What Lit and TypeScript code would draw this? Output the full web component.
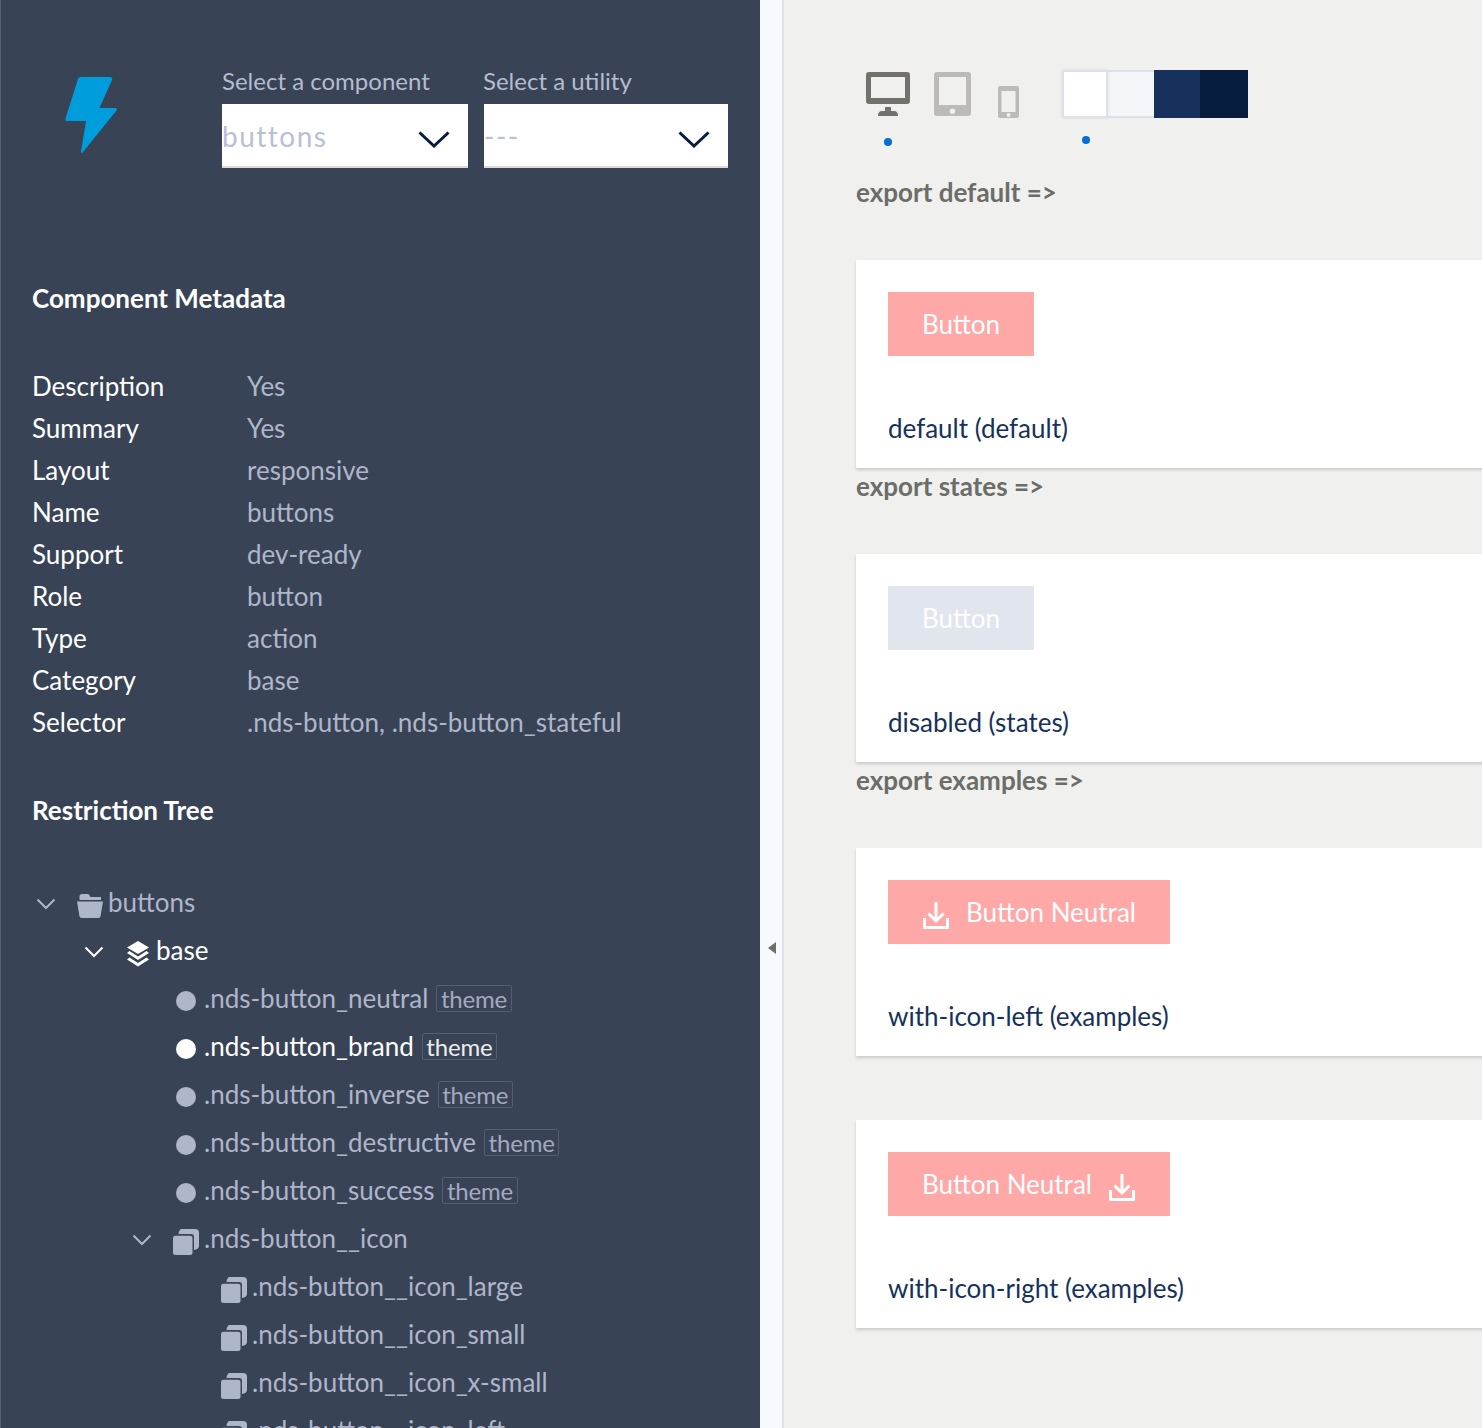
import { LitElement, html, css, svg } from 'lit';
import { customElement } from 'lit/decorators.js';

const chevron = html`<svg class="chev" viewBox="0 0 20 12"><path d="M1.500 1.500 10 10l8.500-8.500" fill="none" stroke="currentColor" stroke-width="2"/></svg>`;
const selectChevron = html`<svg class="caret" viewBox="0 0 32 17"><path d="M1.500 1.500 16 15l14.500-13.500" fill="none" stroke="currentColor" stroke-width="3"/></svg>`;

const folderIcon = svg`<path d="M6 3h6.500l2 3H25v3H3.500V5.500Q3.500 3 6 3ZM1 10.500H27L24.500 25.500Q24 27 22 27H6Q4 27 3.500 25.500Z" fill="currentColor"/>`;
const stackIcon = svg`<path d="M14 2 25 8.500 14 15 3 8.500ZM5.500 12 14 17.500 22.500 12 25 14 14 21 3 14ZM5.500 18.500 14 24 22.500 18.500 25 20.500 14 27.500 3 20.500Z" fill="currentColor"/>`;
const copyIcon = svg`<path d="M10 2h13q4 0 4 4v13q0 3-5 4V10q0-3-3-3H6.500Q7 2 10 2Z" fill="currentColor"/><rect x="1" y="8.700" width="19.500" height="19.300" rx="2.500" fill="currentColor"/>`;

type Row = { depth: number; label: string; icon?: 'folder' | 'stack' | 'copy' | 'dot'; open?: boolean; theme?: boolean; active?: boolean };

const META = [
  ['Description', 'Yes'],
  ['Summary', 'Yes'],
  ['Layout', 'responsive'],
  ['Name', 'buttons'],
  ['Support', 'dev-ready'],
  ['Role', 'button'],
  ['Type', 'action'],
  ['Category', 'base'],
  ['Selector', '.nds-button, .nds-button_stateful'],
];

const TREE: Row[] = [
  { depth: 0, label: 'buttons', icon: 'folder', open: true },
  { depth: 1, label: 'base', icon: 'stack', open: true, active: true },
  { depth: 2, label: '.nds-button_neutral', icon: 'dot', theme: true },
  { depth: 2, label: '.nds-button_brand', icon: 'dot', theme: true, active: true },
  { depth: 2, label: '.nds-button_inverse', icon: 'dot', theme: true },
  { depth: 2, label: '.nds-button_destructive', icon: 'dot', theme: true },
  { depth: 2, label: '.nds-button_success', icon: 'dot', theme: true },
  { depth: 2, label: '.nds-button__icon', icon: 'copy', open: true },
  { depth: 3, label: '.nds-button__icon_large', icon: 'copy' },
  { depth: 3, label: '.nds-button__icon_small', icon: 'copy' },
  { depth: 3, label: '.nds-button__icon_x-small', icon: 'copy' },
  { depth: 3, label: '.nds-button__icon_left', icon: 'copy' },
];

const downloadIcon = html`<svg class="dl" viewBox="0 0 26 27"><path d="M13 0v19M5.500 11.500 13 19l7.500-7.500M1.500 16v9.500h23V16" fill="none" stroke="currentColor" stroke-width="3" stroke-linejoin="round"/></svg>`;

@customElement('app-root')
export class AppRoot extends LitElement {
  static styles = css`
    :host {
      display: flex;
      height: 1428px;
      overflow: hidden;
      font-family: Lato, 'Open Sans', sans-serif;
      font-size: 26px;
    }
    .side {
      width: 760px;
      flex: none;
      box-sizing: border-box;
      background: #394356;
      border-left: 1px solid #56606f;
      padding-left: 31px;
      color: #fff;
      overflow: hidden;
    }
    .head {
      display: flex;
      padding-top: 64px;
    }
    .logo {
      width: 52px;
      height: 76px;
      margin: 13px 0 0 33px;
      flex: none;
    }
    .pick {
      width: 246px;
      color: #b4bccf;
    }
    .pick.first {
      margin-left: 105px;
      margin-right: 16px;
    }
    .pick.second {
      width: 244px;
    }
    .pick.second label {
      margin-left: -1px;
    }
    .pick label {
      display: block;
      height: 40px;
      line-height: 34px;
      font-size: 24px;
    }
    .select {
      height: 64px;
      box-sizing: border-box;
      background: #fff;
      border-bottom: 2px solid #dddbd8;
      display: flex;
      align-items: center;
      justify-content: space-between;
      padding: 2px 18px 0 0;
      font-size: 28px;
      letter-spacing: 1.500px;
      color: #b8c0d4;
    }
    .caret {
      width: 32px;
      height: 17px;
      color: #061c3f;
      margin-top: 7px;
    }
    h2 {
      font-size: 26px;
      line-height: 42px;
      font-weight: 700;
      margin: 0;
    }
    .meta-title {
      margin: 109px 0 46px;
    }
    .meta {
      display: grid;
      grid-template-columns: 215px 1fr;
      line-height: 42px;
      margin: 0;
    }
    .meta dt {
      color: #fff;
    }
    .meta dd {
      margin: 0;
      color: #aeb6ca;
    }
    .tree-title {
      margin: 46px 0 47px;
    }
    .row {
      display: flex;
      align-items: center;
      height: 48px;
      color: #aeb6ca;
      white-space: nowrap;
    }
    .row.active {
      color: #fff;
    }
    .d0 { padding-left: 0; }
    .d1 { padding-left: 48px; }
    .d2 { padding-left: 96px; }
    .d3 { padding-left: 144px; }
    .toggle {
      width: 44px;
      flex: none;
      display: flex;
      padding-left: 4px;
      margin-top: 4px;
      box-sizing: border-box;
    }
    .chev {
      width: 20px;
      height: 12px;
    }
    .ico {
      width: 32px;
      height: 28px;
      flex: none;
      display: flex;
      align-items: center;
      margin-top: 6px;
    }
    .ico svg {
      width: 28px;
      height: 28px;
    }
    .dot {
      width: 20px;
      height: 20px;
      border-radius: 50%;
      background: currentColor;
      margin-left: 4px;
    }
    .theme {
      margin-left: 8px;
      border: 1px solid #56627a;
      border-radius: 2px;
      padding: 0 3.500px;
      line-height: 25px;
      height: 25px;
      font-size: 24px;
      letter-spacing: -0.200px;
      opacity: 0.9;
    }
    .split {
      width: 24px;
      flex: none;
      box-sizing: border-box;
      background: #f6f9fe;
      border-right: 2px solid #dde1ea;
      display: flex;
      align-items: center;
      padding: 468px 0 0 8px;
    }
    .split i {
      width: 0;
      height: 0;
      border-style: solid;
      border-width: 6px 8px 6px 0;
      border-color: transparent #6f6e69 transparent transparent;
    }
    main {
      flex: 1;
      min-width: 0;
      background: #f0f0ee;
      padding: 70px 0 0 72px;
      overflow: hidden;
    }
    .tools {
      display: flex;
      height: 104px;
    }
    .devices {
      display: flex;
      margin-left: 10px;
    }
    .device {
      position: relative;
      height: 48px;
      display: flex;
      align-items: flex-end;
    }
    .device svg {
      display: block;
    }
    .desktop svg {
      margin-bottom: 2px;
    }
    .tablet {
      margin-left: 23.500px;
    }
    .tablet svg {
      margin-bottom: 2px;
    }
    .phone {
      margin-left: 27px;
    }
    .sel-dot {
      position: absolute;
      width: 8px;
      height: 8px;
      border-radius: 50%;
      background: #0070d2;
      top: 68px;
      left: 18px;
    }
    .swatches {
      display: flex;
      height: 48px;
      position: relative;
      margin-left: 43.500px;
    }
    .swatches .sel-dot {
      top: 66px;
      left: 20px;
    }
    .swatch {
      width: 46px;
      height: 48px;
      box-sizing: border-box;
    }
    .swatch.white {
      background: #fff;
      border: 2px solid #dde1ea;
      box-shadow: 0 0 3px rgba(0, 0, 0, 0.1);
      position: relative;
    }
    .swatch.light {
      background: #f4f6f9;
      border-top: 2px solid #dde1ea;
      border-bottom: 2px solid #dde1ea;
    }
    .swatch.navy { background: #16325c; }
    .swatch.ink {
      width: 48px;
      background: #061c3f;
    }
    .export {
      font-weight: 700;
      color: #6b6d68;
      line-height: 36px;
      margin-bottom: 50px;
    }
    .card {
      background: #fff;
      height: 208px;
      box-sizing: border-box;
      padding: 32px;
      margin-right: -20px;
      box-shadow: 0 2px 3px rgba(0, 0, 0, 0.16);
    }
    .card + .card {
      margin-top: 64px;
    }
    .btn {
      display: inline-flex;
      align-items: center;
      box-sizing: border-box;
      height: 64px;
      padding: 0 34px;
      background: #ffa8a8;
      color: #fff;
    }
    .btn.off {
      background: #e0e5ee;
    }
    .btn.left {
      padding-left: 35px;
      gap: 17px;
    }
    .btn.right {
      padding-right: 35px;
      gap: 17px;
    }
    .dl {
      width: 26px;
      height: 27px;
      flex: none;
      margin-top: 7px;
    }
    .name {
      margin-top: 51px;
      line-height: 42px;
      color: #16325c;
    }
  `;

  private renderRow(r: Row) {
    const icon = r.icon === 'dot'
      ? html`<span class="dot"></span>`
      : html`<svg viewBox="0 0 28 28">${r.icon === 'folder' ? folderIcon : r.icon === 'stack' ? stackIcon : copyIcon}</svg>`;
    return html`<div class="row d${r.depth} ${r.active ? 'active' : ''}">
      <span class="toggle">${r.open ? chevron : ''}</span>
      <span class="ico">${icon}</span>
      <span>${r.label}</span>
      ${r.theme ? html`<span class="theme">theme</span>` : ''}
    </div>`;
  }

  private renderCard(content: unknown, name: string) {
    return html`<div class="card">${content}<div class="name">${name}</div></div>`;
  }

  render() {
    return html`
      <aside class="side">
        <div class="head">
          <svg class="logo" viewBox="0 0 52 76">
            <path d="M16 0H45q3 0 2 3L34.500 31H50q2.500 0 1.500 2.500L18 75q-2 2-2-.5L21 44H2q-2 0-1.500-2.500L13 2q.5-2 3-2Z" fill="#009ddc"/>
          </svg>
          <div class="pick first">
            <label>Select a component</label>
            <div class="select">buttons ${selectChevron}</div>
          </div>
          <div class="pick second">
            <label>Select a utility</label>
            <div class="select">--- ${selectChevron}</div>
          </div>
        </div>

        <h2 class="meta-title">Component Metadata</h2>
        <dl class="meta">
          ${META.map(([k, v]) => html`<dt>${k}</dt><dd>${v}</dd>`)}
        </dl>

        <h2 class="tree-title">Restriction Tree</h2>
        ${TREE.map((r) => this.renderRow(r))}
      </aside>

      <div class="split"><i></i></div>

      <main>
        <div class="tools">
          <div class="devices">
            <div class="device desktop">
              <svg width="44" height="44" viewBox="0 0 44 44">
                <path d="M3 0h38q3 0 3 3v26q0 3-3 3H3q-3 0-3-3V3q0-3 3-3Zm2 5v21h34V5ZM19 35h6v4h3q4 0 4 5H12q0-5 4-5h3Z" fill="#72716c" fill-rule="evenodd"/>
              </svg>
              <span class="sel-dot"></span>
            </div>
            <div class="device tablet">
              <svg width="37" height="44" viewBox="0 0 37 44">
                <path d="M3 0h31q3 0 3 3v38q0 3-3 3H3q-3 0-3-3V3q0-3 3-3Zm2 5v28h27V5Zm13.500 31.500a2.700 2.700 0 1 0 0 5.400 2.700 2.700 0 0 0 0-5.400Z" fill="#bcbbb7" fill-rule="evenodd"/>
              </svg>
            </div>
            <div class="device phone">
              <svg width="21" height="32" viewBox="0 0 21 32">
                <path d="M2 0h17q2 0 2 2v28q0 2-2 2H2q-2 0-2-2V2q0-2 2-2Zm1.500 5v21h14V5Zm7 22a2 2 0 1 0 0 4 2 2 0 0 0 0-4Z" fill="#bcbbb7" fill-rule="evenodd"/>
              </svg>
            </div>
          </div>
          <div class="swatches">
            <div class="swatch white"></div>
            <div class="swatch light"></div>
            <div class="swatch navy"></div>
            <div class="swatch ink"></div>
            <span class="sel-dot"></span>
          </div>
        </div>

        <div class="export">export default =&gt;</div>
        ${this.renderCard(html`<span class="btn">Button</span>`, 'default (default)')}
        <div class="export">export states =&gt;</div>
        ${this.renderCard(html`<span class="btn off">Button</span>`, 'disabled (states)')}
        <div class="export">export examples =&gt;</div>
        ${this.renderCard(html`<span class="btn left">${downloadIcon}Button Neutral</span>`, 'with-icon-left (examples)')}
        ${this.renderCard(html`<span class="btn right">Button Neutral${downloadIcon}</span>`, 'with-icon-right (examples)')}
      </main>
    `;
  }
}
